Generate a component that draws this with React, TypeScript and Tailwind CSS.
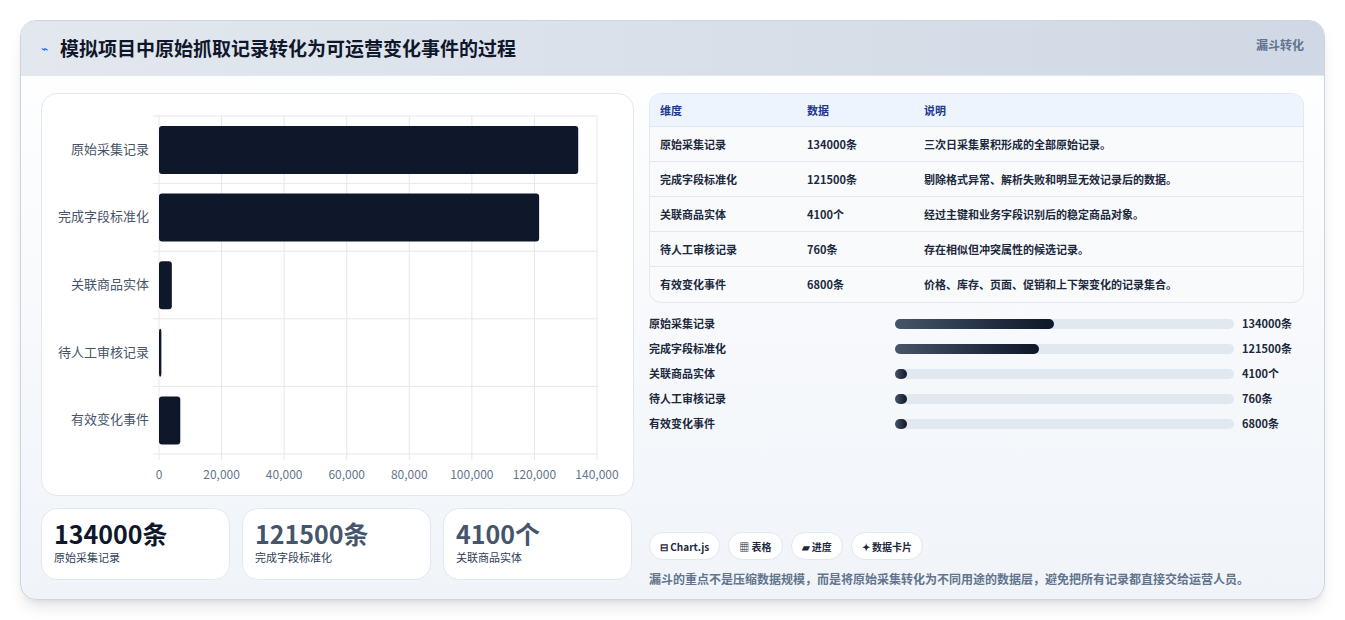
const rows = [
  { name: '原始采集记录', v: 134000, u: '134000条', d: '三次日采集累积形成的全部原始记录。' },
  { name: '完成字段标准化', v: 121500, u: '121500条', d: '剔除格式异常、解析失败和明显无效记录后的数据。' },
  { name: '关联商品实体', v: 4100, u: '4100个', d: '经过主键和业务字段识别后的稳定商品对象。' },
  { name: '待人工审核记录', v: 760, u: '760条', d: '存在相似但冲突属性的候选记录。' },
  { name: '有效变化事件', v: 6800, u: '6800条', d: '价格、库存、页面、促销和上下架变化的记录集合。' },
];

function Chart() {
  const x0 = 117, w = 438, y0 = 22, rh = 67.6;
  const ticks = [0, 20000, 40000, 60000, 80000, 100000, 120000, 140000];
  return (
    <svg width="593" height="403" className="block">
      {ticks.map((t) => {
        const x = x0 + (t / 140000) * w;
        return (
          <g key={t}>
            <line x1={x} y1={y0} x2={x} y2={y0 + rh * 5 + 6} stroke="#e5e7eb" />
            <text x={x} y={385} textAnchor="middle" fontSize="12" fill="#64748b">{t.toLocaleString('en-US')}</text>
          </g>
        );
      })}
      {[0, 1, 2, 3, 4, 5].map((i) => (
        <line key={i} x1={x0 - 6} x2={x0 + w} y1={y0 + i * rh} y2={y0 + i * rh} stroke="#e5e7eb" />
      ))}
      {rows.map((r, i) => (
        <g key={r.name}>
          <text x={x0 - 10} y={y0 + i * rh + rh / 2 + 4} textAnchor="end" fontSize="13" fill="#475569">{r.name}</text>
          <rect x={x0} y={y0 + i * rh + 10} width={Math.max(2, (r.v / 140000) * w)} height={48} rx="3" fill="#0f172a" />
        </g>
      ))}
    </svg>
  );
}

export default function App() {
  return (
    <div className="w-[1345px] h-[620px] bg-white p-5 pb-5" style={{ fontFamily: '"Noto Sans CJK SC", "Noto Sans", sans-serif' }}>
      <div className="h-[580px] rounded-2xl border border-slate-300 bg-gradient-to-b from-white to-[#f0f4f9] shadow-lg overflow-hidden flex flex-col">
        <div className="h-[55px] flex items-center justify-between px-5 bg-gradient-to-r from-[#e3e8ef] to-[#cfd8e4] border-b border-slate-200">
          <div className="flex items-center gap-3">
            <span className="text-blue-600 text-xs">⌁</span>
            <h1 className="text-[19px] font-bold text-slate-900">模拟项目中原始抓取记录转化为可运营变化事件的过程</h1>
          </div>
          <span className="text-xs font-semibold text-slate-500 self-start mt-4">漏斗转化</span>
        </div>
        <div className="flex gap-[15px] px-5 pt-[17px]">
          <div className="w-[593px] flex flex-col gap-3">
            <div className="h-[403px] rounded-2xl border border-slate-200 bg-white"><Chart /></div>
            <div className="flex gap-3">
              {[['134000条', '原始采集记录', 'text-slate-900'], ['121500条', '完成字段标准化', 'text-slate-600'], ['4100个', '关联商品实体', 'text-slate-600']].map(([a, b, c]) => (
                <div key={b} className="w-[189px] h-[72px] rounded-2xl border border-slate-200 bg-white px-3 pt-2">
                  <div className={`text-[25px] font-bold leading-8 ${c}`}>{a}</div>
                  <div className="text-[11px] text-slate-700">{b}</div>
                </div>
              ))}
            </div>
          </div>
          <div className="w-[657px] flex flex-col">
            <div className="rounded-xl border border-slate-200 overflow-hidden bg-[#f8fafc] text-[11px] font-semibold">
              <div className="flex h-[33px] items-center bg-[#edf4fd] text-blue-900 border-b border-slate-200">
                <div className="w-[157px] pl-[10px]">维度</div><div className="w-[117px]">数据</div><div>说明</div>
              </div>
              {rows.map((r) => (
                <div key={r.name} className="flex h-[35px] items-center text-slate-800 border-b border-slate-200 last:border-b-0">
                  <div className="w-[157px] pl-[10px]">{r.name}</div><div className="w-[117px]">{r.u}</div><div>{r.d}</div>
                </div>
              ))}
            </div>
            <div className="flex flex-col gap-[8px] mt-[12px]">
              {rows.map((r) => (
                <div key={r.name} className="flex items-center h-[17px] text-[11px] font-semibold text-slate-800">
                  <div className="w-[246px]">{r.name}</div>
                  <div className="w-[339px] h-[10px] rounded-full bg-[#e2e8f0]">
                    <div className="h-full rounded-full bg-gradient-to-r from-[#475569] to-[#0f172a]" style={{ width: Math.max(12, (r.v / 134000) * 159) }} />
                  </div>
                  <div className="ml-2">{r.u}</div>
                </div>
              ))}
            </div>
            <div className="flex gap-2 mt-[100px]">
              {['⊟ Chart.js', '▦ 表格', '▰ 进度', '✦ 数据卡片'].map((c) => (
                <span key={c} className="h-[28px] px-2.5 flex items-center rounded-full bg-white border border-slate-200 text-[10px] font-semibold text-slate-800">{c}</span>
              ))}
            </div>
            <p className="mt-[10px] text-[12px] font-semibold text-slate-500">漏斗的重点不是压缩数据规模，而是将原始采集转化为不同用途的数据层，避免把所有记录都直接交给运营人员。</p>
          </div>
        </div>
      </div>
    </div>
  );
}
